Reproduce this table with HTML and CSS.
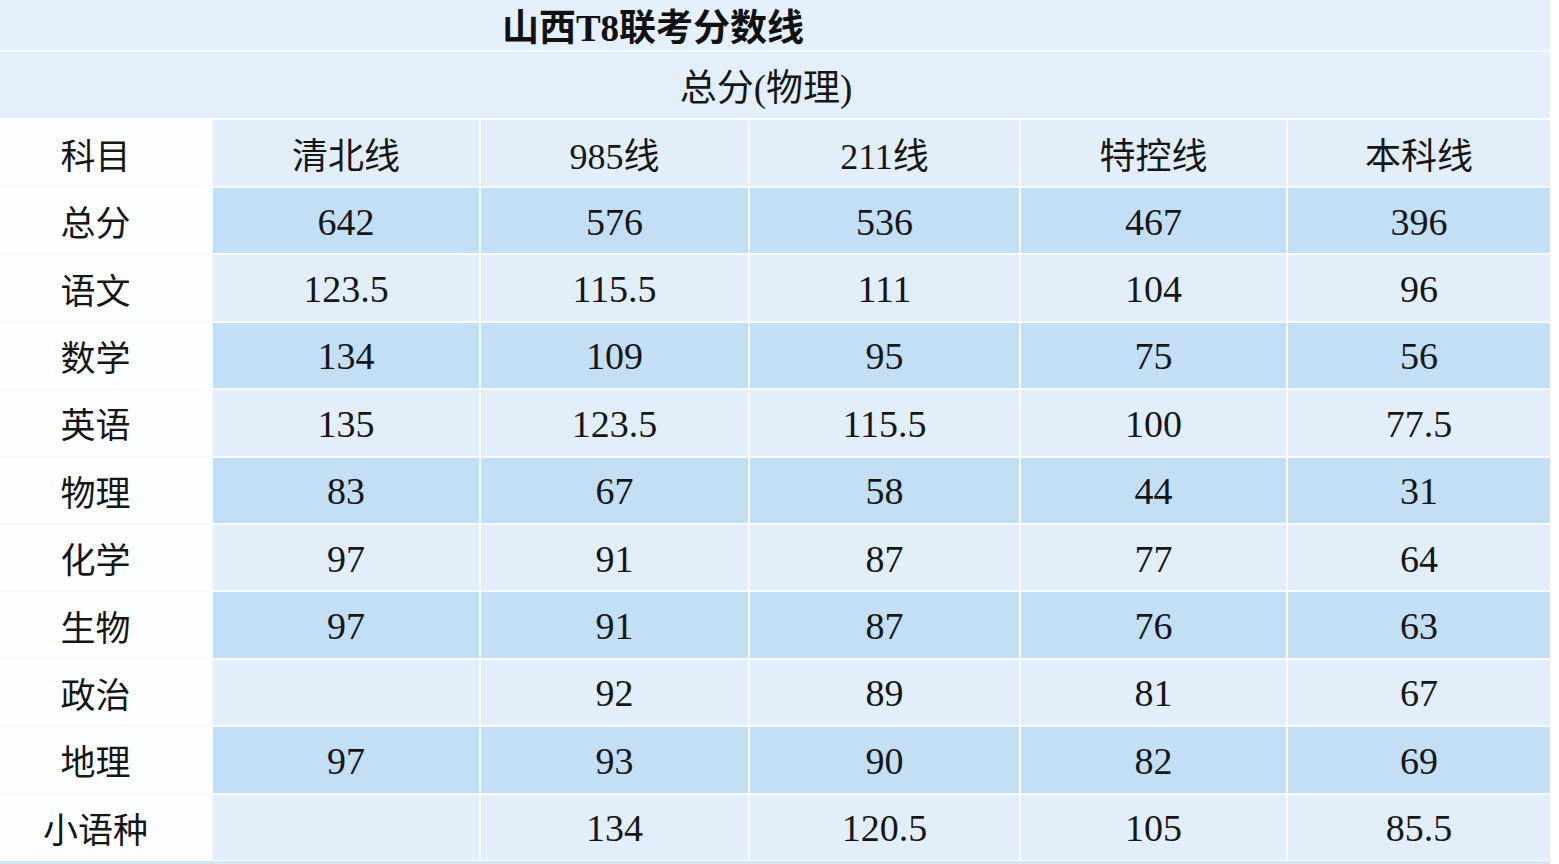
FILE: index.html
```html
<!DOCTYPE html>
<html lang="zh-CN">
<head>
<meta charset="utf-8">
<title>山西T8联考分数线</title>
<link rel="stylesheet" href="styles.css">
</head>
<body>
<div class="sheet">
  <div class="grid">
    <div class="title">山西T8联考分数线</div>
    <div class="subtitle">总分(物理)</div>

    <div class="c head first">科目</div>
    <div class="c head">清北线</div>
    <div class="c head">985线</div>
    <div class="c head">211线</div>
    <div class="c head">特控线</div>
    <div class="c head">本科线</div>

    <div class="c first">总分</div>
    <div class="c dark num">642</div><div class="c dark num">576</div><div class="c dark num">536</div><div class="c dark num">467</div><div class="c dark num">396</div>

    <div class="c first">语文</div>
    <div class="c light num">123.5</div><div class="c light num">115.5</div><div class="c light num">111</div><div class="c light num">104</div><div class="c light num">96</div>

    <div class="c first">数学</div>
    <div class="c dark num">134</div><div class="c dark num">109</div><div class="c dark num">95</div><div class="c dark num">75</div><div class="c dark num">56</div>

    <div class="c first">英语</div>
    <div class="c light num">135</div><div class="c light num">123.5</div><div class="c light num">115.5</div><div class="c light num">100</div><div class="c light num">77.5</div>

    <div class="c first">物理</div>
    <div class="c dark num">83</div><div class="c dark num">67</div><div class="c dark num">58</div><div class="c dark num">44</div><div class="c dark num">31</div>

    <div class="c first">化学</div>
    <div class="c light num">97</div><div class="c light num">91</div><div class="c light num">87</div><div class="c light num">77</div><div class="c light num">64</div>

    <div class="c first">生物</div>
    <div class="c dark num">97</div><div class="c dark num">91</div><div class="c dark num">87</div><div class="c dark num">76</div><div class="c dark num">63</div>

    <div class="c first">政治</div>
    <div class="c light num"></div><div class="c light num">92</div><div class="c light num">89</div><div class="c light num">81</div><div class="c light num">67</div>

    <div class="c first">地理</div>
    <div class="c dark num">97</div><div class="c dark num">93</div><div class="c dark num">90</div><div class="c dark num">82</div><div class="c dark num">69</div>

    <div class="c first">小语种</div>
    <div class="c light num"></div><div class="c light num">134</div><div class="c light num">120.5</div><div class="c light num">105</div><div class="c light num">85.5</div>
  </div>
  <div class="bottom-line"></div>
</div>
</body>
</html>
```
FILE: styles.css
```css
html, body {
  margin: 0;
  padding: 0;
  background: #ffffff;
}

body {
  font-family: "Liberation Serif", "Noto Sans CJK SC", serif;
  color: #161616;
}

.sheet {
  width: 1550px;
  background: #ffffff;
}

.grid {
  display: grid;
  grid-template-columns: 211px 266px 267px 269px 265px 262px;
  grid-template-rows: 50px 66px 66px repeat(10, 65.4px);
  gap: 2px;
  background: #f8fbfe;
}

.title {
  grid-column: 1 / -1;
  background: #e4f0fb;
  display: flex;
  align-items: center;
  justify-content: center;
  padding-right: 244px;
  font-size: 37px;
  font-weight: bold;
  color: #111111;
}

.subtitle {
  grid-column: 1 / -1;
  background: #e3f0fb;
  display: flex;
  align-items: center;
  justify-content: center;
  padding-right: 18px;
  font-size: 37px;
}

.c {
  display: flex;
  align-items: center;
  justify-content: center;
  font-size: 34px;
}

.head {
  background: #e2effa;
  font-size: 36px;
}

.first {
  background: #fdfeff;
  font-size: 35px;
  padding-right: 20px;
}

.num {
  font-size: 38px;
  padding-top: 2px;
}

.dark {
  background: #c3dff6;
}

.light {
  background: #e2effa;
}

.bottom-line {
  height: 3px;
  margin-top: 1px;
  background: #d3e6f4;
}
```
